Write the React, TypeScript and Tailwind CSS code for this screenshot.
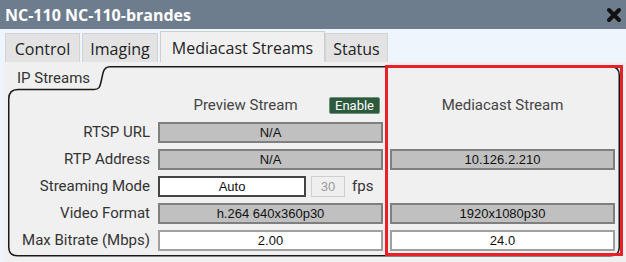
import React from "react";

const label = "text-[15px] text-[#333] text-right pr-[8px] leading-none whitespace-nowrap";
const grayField = "h-[21px] bg-[#c0c0c0] border-2 border-[#7f7f7f] flex items-center justify-center text-[13px] text-[#111]";
const whiteField = "h-[21px] bg-white border-2 border-[#a0a0a0] flex items-center justify-center text-[13px] text-[#111]";

function Tab({name, active, w}: { name: string, active?: boolean, w: string }) {
    if (active) {
        return (
            <div className={`${w} h-[31px] bg-[#f0f0f0] border border-b-0 border-[#cfcfcf] flex items-center justify-center pt-[1px] text-[16px] text-[#222]`}>
                {name}
            </div>
        );
    }
    return (
        <div className={`${w} h-[29px] bg-[#e3e3e3] border border-b-0 border-[#d2d2d2] flex items-center justify-center pt-[2px] text-[16px] text-[#222]`}>
            {name}
        </div>
    );
}

export default function App() {
    return (
        <div className="relative w-[626px] h-[262px] overflow-hidden bg-[#eef5fc]" style={{fontFamily: "Roboto, sans-serif"}}>
            {/* title bar */}
            <div className="h-[29px] bg-[#6e7d8e] flex items-center justify-between pl-[5px] pr-[4px]">
                <span className="text-white font-bold text-[16px] leading-none" style={{fontFamily: "'Open Sans', sans-serif"}}>
                    NC-110 NC-110-brandes
                </span>
                <svg width="16" height="16" viewBox="0 0 16 16">
                    <path d="M3 3 L13 13 M13 3 L3 13" stroke="#111" strokeWidth="4" strokeLinecap="round"/>
                </svg>
            </div>

            {/* tabs */}
            <div className="h-[33px] flex items-end pl-[5px]" style={{fontFamily: "'Open Sans', sans-serif"}}>
                <Tab name="Control" w="w-[75px]"/>
                <div className="w-[2px]"/>
                <Tab name="Imaging" w="w-[76px]"/>
                <div className="w-[2px]"/>
                <Tab name="Mediacast Streams" active w="w-[165px]"/>
                <Tab name="Status" w="w-[63px]"/>
            </div>

            {/* panel */}
            <div className="ml-[3px] h-[200px] bg-[#f0f0f0] pt-[4px] pl-[5px]">
                <div className="relative w-[612px] h-[191px]">
                    <svg className="absolute inset-0" width="612" height="191">
                        <path
                            d="M102 0.75 H603 Q611.25 0.75 611.25 9 V181 Q611.25 189.75 602.5 189.75 H9.5 Q0.75 189.75 0.75 181 V33 Q0.75 23.5 10 23.5 H86 C91 23.5 92 21 93 16 L95 7 C96 2.5 98 0.75 102 0.75 Z"
                            fill="none" stroke="#1a1a1a" strokeWidth="1.5"/>
                    </svg>

                    <div className="relative">
                        <div className="h-[24px] pl-[9px] flex items-center text-[15px] text-[#333]">IP Streams</div>

                        <div className="grid grid-cols-[150px_232px_225px] items-center">
                            <div className="h-[30px] col-span-1"/>
                            <div className="h-[30px] flex items-center pr-[10px]">
                                <span className="flex-1 text-center text-[15px] text-[#444] pl-[4px]">Preview Stream</span>
                                <span className="h-[17px] px-[5px] bg-[#2d5a3d] border border-[#6f8f7a] rounded-[2px] text-white text-[13px] leading-none flex items-center">
                                    Enable
                                </span>
                            </div>
                            <div className="h-[30px] flex items-center justify-center text-[15px] text-[#444]">Mediacast Stream</div>
                        </div>

                        <div className="mt-[2px] grid grid-cols-[150px_232px_225px] gap-y-[6px] items-center" style={{fontFamily: "'Liberation Sans', Arial, sans-serif"}}>
                            <div className={label} style={{fontFamily: "Roboto, sans-serif"}}>RTSP URL</div>
                            <div className={`${grayField} w-[225px]`}>N/A</div>
                            <div/>

                            <div className={label} style={{fontFamily: "Roboto, sans-serif"}}>RTP Address</div>
                            <div className={`${grayField} w-[225px]`}>N/A</div>
                            <div className={grayField}>10.126.2.210</div>

                            <div className={label} style={{fontFamily: "Roboto, sans-serif"}}>Streaming Mode</div>
                            <div className="h-[21px] flex items-center">
                                <div className="w-[148px] h-[21px] bg-white border-2 border-[#444] flex items-center justify-center text-[13px] text-[#111]">Auto</div>
                                <div className="ml-[5px] w-[34px] h-[21px] bg-[#efefef] border border-[#cfcfcf] flex items-center justify-center text-[13px] text-[#999]">30</div>
                                <span className="ml-[7px] text-[15px] text-[#333]" style={{fontFamily: "Roboto, sans-serif"}}>fps</span>
                            </div>
                            <div/>

                            <div className={label} style={{fontFamily: "Roboto, sans-serif"}}>Video Format</div>
                            <div className={`${grayField} w-[225px]`}>h.264 640x360p30</div>
                            <div className={grayField}>1920x1080p30</div>

                            <div className={label} style={{fontFamily: "Roboto, sans-serif"}}>Max Bitrate (Mbps)</div>
                            <div className={`${whiteField} w-[225px]`}>2.00</div>
                            <div className={whiteField}>24.0</div>
                        </div>
                    </div>
                </div>
            </div>

            {/* highlight */}
            <div className="absolute left-[385px] top-[65px] w-[238px] h-[191px] border-[3px] border-[#e8202a]"/>
        </div>
    );
}
